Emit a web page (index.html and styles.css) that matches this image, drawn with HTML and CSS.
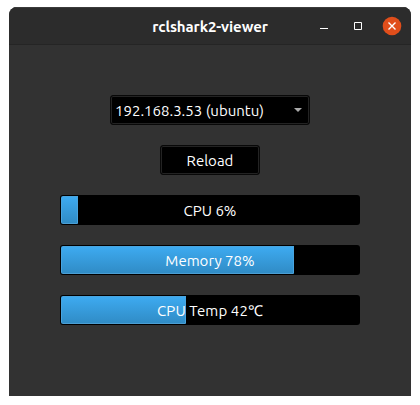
FILE: index.html
```html
<!DOCTYPE html>
<html lang="en">
<head>
<meta charset="utf-8">
<title>rclshark2-viewer</title>
<link rel="stylesheet" href="styles.css">
</head>
<body>
<main class="window">
  <header class="titlebar">
    <h1 class="title">rclshark2-viewer</h1>
    <div class="controls">
      <svg class="control" width="20" height="20" viewBox="0 0 20 20"><path d="M6 12.5h8" stroke="#fff"/></svg>
      <svg class="control" width="20" height="20" viewBox="0 0 20 20"><path d="M6.5 6.5h7v7h-7z" fill="none" stroke="#fff"/></svg>
      <svg class="control" width="20" height="20" viewBox="0 0 20 20"><circle cx="10" cy="10" r="9.3" fill="#e04e1b"/><path d="M6.5 6.5l7 7m0-7l-7 7" stroke="#fff" stroke-width="1.4"/></svg>
    </div>
  </header>
  <section class="content">
    <div class="field select"><span class="address">192.168.3.53 (ubuntu)</span><svg width="8" height="4" viewBox="0 0 8 4"><path d="M0 0h8L4 4z" fill="#aaa"/></svg></div>
    <button class="field reload">Reload</button>
    <div class="bar"><div class="fill" style="width:17px"></div><span class="label cpu">CPU 6%</span></div>
    <div class="bar"><div class="fill" style="width:233px"></div><span class="label memory">Memory 78%</span></div>
    <div class="bar"><div class="fill" style="width:125px"></div><span class="label temp">CPU Temp 42℃</span></div>
  </section>
</main>
</body>
</html>
```
FILE: styles.css
```css
* { box-sizing: border-box; }
body {
  margin: 0;
  padding: 7px 9px 9px;
  background: #fff;
  color: #fff;
  font: 15px/20px "Ubuntu", "Noto Sans", "Noto Sans CJK JP", sans-serif;
}
.window {
  width: 402px;
  height: 389px;
  background: #323232;
  border-radius: 8px 8px 0 0;
  overflow: hidden;
}
.titlebar {
  height: 38px;
  display: grid;
  grid-template-columns: 1fr auto 1fr;
  align-items: start;
  padding-top: 8px;
  background: #2c2c2c;
  border-top: 1px solid #3b3b3b;
  border-bottom: 1px solid #252525;
}
.title {
  grid-column: 2;
  margin: 1px 0 0;
  font-size: 15px;
  line-height: 20px;
  font-weight: 700;
  letter-spacing: -0.1px;
  white-space: nowrap;
}
.controls {
  justify-self: end;
  display: flex;
  gap: 14px;
  padding-right: 9px;
}
.control { display: block; }
.content {
  padding-top: 50px;
  display: flex;
  flex-direction: column;
  align-items: center;
  gap: 20px;
}
.field {
  height: 30px;
  background: #000;
  border: 1px solid #080808;
  border-radius: 3px;
  box-shadow: inset 0 0 0 1px #232323;
  color: #fff;
  font: inherit;
}
.select {
  width: 200px;
  display: flex;
  align-items: center;
  justify-content: space-between;
  padding: 0 7px 0 4px;
}
.address { padding-top: 2px; }
.reload { width: 100px; padding: 2px 0 0; }
.bar {
  width: 300px;
  height: 30px;
  display: grid;
  padding: 1px;
  background: #000;
  border-radius: 3px;
}
.fill {
  grid-area: 1 / 1;
  border: 1px solid #48a4df;
  border-bottom-color: #4b9ed3;
  border-radius: 2px 0 0 2px;
  background: linear-gradient(#3daaf0, #308cc6);
}
.label {
  grid-area: 1 / 1;
  place-self: center;
  padding-top: 2px;
  white-space: nowrap;
}
.temp { letter-spacing: 0.1px; }
```
